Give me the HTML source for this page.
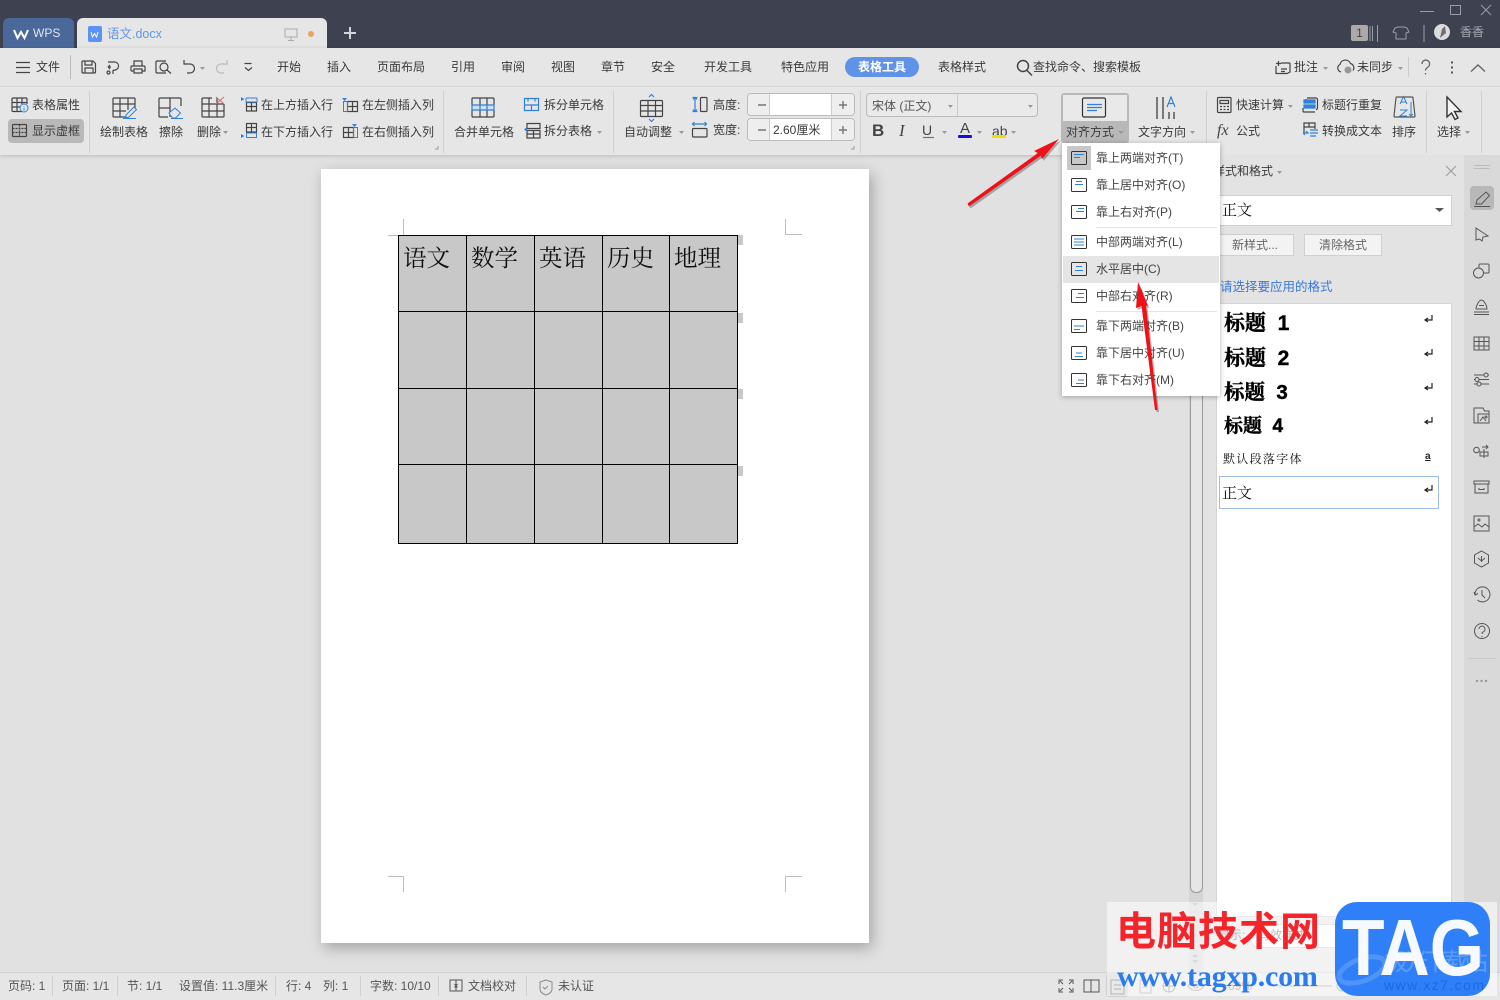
<!DOCTYPE html>
<html lang="zh"><head><meta charset="utf-8"><title>语文.docx</title>
<style>
html,body{margin:0;padding:0;width:1500px;height:1000px;overflow:hidden;background:#e1e1e1}
body{position:relative;font:12px/16px "Liberation Sans","Noto Sans CJK SC",sans-serif;color:#3a3a3a}
.a{position:absolute}
.t{position:absolute;white-space:nowrap;line-height:16px}
svg{position:absolute;left:0;top:0;overflow:visible}
.i{fill:none;stroke:#444;stroke-width:1.2}
.b{fill:none;stroke:#2f80d8;stroke-width:1.2}
.c{fill:#999}
.s{position:absolute;width:1px;background:#d0d0d0}
.m{position:absolute;left:1096px;white-space:nowrap;line-height:16px;color:#444}
.h{position:absolute;left:1224px;font:bold 21px/26px "Liberation Sans","Noto Serif CJK SC",serif;color:#000;white-space:pre;-webkit-text-stroke:.4px #000}
.tb{position:absolute;top:243px;font:23.500px/26px 'Noto Serif CJK SC',serif;color:#111;white-space:nowrap}
</style></head><body>

<div class="a" style="left:0;top:0;width:1500px;height:48px;background:#3e4250"></div>
<div class="a" style="left:3px;top:18px;width:71px;height:30px;background:#4a6899;border-radius:6px 6px 0 0"></div>
<div class="a" style="left:77px;top:18px;width:250px;height:30px;background:#e6e6e6;border-radius:6px 6px 0 0"></div>
<span class="t" style="left:33px;top:25px;color:#dfe5ee">WPS</span>
<span class="t" style="left:107px;top:26px;color:#5f95ee;font-size:12.5px">语文.docx</span>
<span class="t" style="left:1460px;top:24px;color:#a8abb2">香香</span>
<div class="a" style="left:1351px;top:25px;width:17px;height:16px;background:#aaa;border-radius:2px;color:#5c3d20;text-align:center;line-height:16px">1</div>

<div class="a" style="left:0;top:48px;width:1500px;height:107px;background:#e6e6e6;box-shadow:0 1px 4px rgba(0,0,0,.18)"></div>
<div class="a" style="left:0;top:86px;width:1500px;height:1px;background:#d6d6d6"></div>
<div class="a" style="left:70px;top:55px;width:1px;height:24px;background:#bbb"></div>
<div class="a" style="left:1408px;top:57px;width:1px;height:20px;background:#ccc"></div>

<span class="t" style="left:36px;top:59px">文件</span>
<span class="t" style="left:277px;top:59px">开始</span>
<span class="t" style="left:327px;top:59px">插入</span>
<span class="t" style="left:377px;top:59px">页面布局</span>
<span class="t" style="left:451px;top:59px">引用</span>
<span class="t" style="left:501px;top:59px">审阅</span>
<span class="t" style="left:551px;top:59px">视图</span>
<span class="t" style="left:601px;top:59px">章节</span>
<span class="t" style="left:651px;top:59px">安全</span>
<span class="t" style="left:704px;top:59px">开发工具</span>
<span class="t" style="left:781px;top:59px">特色应用</span>
<div class="a" style="left:845px;top:57px;width:74px;height:20px;background:#6093e8;border-radius:10px"></div>
<span class="t" style="left:858px;top:59px;color:#fff;font-weight:bold">表格工具</span>
<span class="t" style="left:938px;top:59px">表格样式</span>
<span class="t" style="left:1033px;top:59px">查找命令、搜索模板</span>
<span class="t" style="left:1294px;top:59px">批注</span>
<span class="t" style="left:1357px;top:59px">未同步</span>

<div class="s" style="left:89px;top:91px;height:62px"></div>
<div class="s" style="left:443px;top:91px;height:62px"></div>
<div class="s" style="left:613px;top:91px;height:62px"></div>
<div class="s" style="left:860px;top:91px;height:62px"></div>
<div class="s" style="left:1206px;top:91px;height:62px"></div>
<div class="s" style="left:1426px;top:91px;height:62px"></div>
<div class="s" style="left:1481px;top:91px;height:62px"></div>

<div class="a" style="left:8px;top:119px;width:76px;height:24px;background:#b9b9b9;border-radius:4px"></div>
<span class="t" style="left:32px;top:97px">表格属性</span>
<span class="t" style="left:32px;top:123px">显示虚框</span>
<span class="t" style="left:100px;top:124px">绘制表格</span>
<span class="t" style="left:159px;top:124px">擦除</span>
<span class="t" style="left:197px;top:124px">删除</span>
<span class="t" style="left:261px;top:97px">在上方插入行</span>
<span class="t" style="left:261px;top:124px">在下方插入行</span>
<span class="t" style="left:362px;top:97px">在左侧插入列</span>
<span class="t" style="left:362px;top:124px">在右侧插入列</span>
<span class="t" style="left:454px;top:124px">合并单元格</span>
<span class="t" style="left:544px;top:97px">拆分单元格</span>
<span class="t" style="left:544px;top:123px">拆分表格</span>
<span class="t" style="left:624px;top:124px">自动调整</span>
<span class="t" style="left:713px;top:97px">高度:</span>
<span class="t" style="left:713px;top:122px">宽度:</span>

<div class="a" style="left:747px;top:93px;width:106px;height:21px;background:#fff;border:1px solid #bbb;border-radius:4px"></div>
<div class="a" style="left:747px;top:118px;width:106px;height:21px;background:#fff;border:1px solid #bbb;border-radius:4px"></div>
<div class="a" style="left:748px;top:94px;width:21px;height:21px;background:#eee;border-right:1px solid #ccc;border-radius:4px 0 0 4px"></div>
<div class="a" style="left:748px;top:119px;width:21px;height:21px;background:#eee;border-right:1px solid #ccc;border-radius:4px 0 0 4px"></div>
<div class="a" style="left:831px;top:94px;width:22px;height:21px;background:#eee;border-left:1px solid #ccc;border-radius:0 4px 4px 0"></div>
<div class="a" style="left:831px;top:119px;width:22px;height:21px;background:#eee;border-left:1px solid #ccc;border-radius:0 4px 4px 0"></div>
<span class="t" style="left:773px;top:122px">2.60厘米</span>

<div class="a" style="left:866px;top:93px;width:170px;height:22px;background:#eaeaea;border:1px solid #bbb;border-radius:4px"></div>
<div class="a" style="left:957px;top:94px;width:1px;height:22px;background:#ccc"></div>
<span class="t" style="left:872px;top:98px;color:#555">宋体 (正文)</span>

<div class="a" style="left:1061px;top:93px;width:68px;height:50px;background:#b8b8b8;border-radius:3px"></div>
<div class="a" style="left:1063px;top:95px;width:64px;height:26px;background:#e9e9e9"></div>
<span class="t" style="left:1066px;top:124px">对齐方式</span>
<span class="t" style="left:1138px;top:124px">文字方向</span>
<span class="t" style="left:1236px;top:97px">快速计算</span>
<span class="t" style="left:1236px;top:123px">公式</span>
<span class="t" style="left:1217px;top:122px;font:italic 16px/18px 'Liberation Serif',serif;color:#444">fx</span>
<span class="t" style="left:1322px;top:97px">标题行重复</span>
<span class="t" style="left:1322px;top:123px">转换成文本</span>
<span class="t" style="left:1392px;top:124px">排序</span>
<span class="t" style="left:1437px;top:124px">选择</span>
<span class="t" style="left:872px;top:122px;font:bold 17px/18px 'Liberation Sans',sans-serif;color:#444">B</span>
<span class="t" style="left:899px;top:122px;font:italic 17px/18px 'Liberation Serif',serif;color:#444">I</span>
<span class="t" style="left:922px;top:121px;font:14px/18px 'Liberation Sans',sans-serif;color:#444">U</span>
<span class="t" style="left:960px;top:120px;font:15px/18px 'Liberation Sans',sans-serif;color:#444">A</span>
<span class="t" style="left:992px;top:122px;font:14px/18px 'Liberation Sans',sans-serif;color:#444">ab</span>

<!-- page -->
<div class="a" style="left:321px;top:169px;width:548px;height:774px;background:#fff;box-shadow:3px 5px 14px rgba(0,0,0,.28)"></div>
<svg width="1500" height="1000" viewBox="0 0 1500 1000">
<g fill="none" stroke="#bdbdbd" stroke-width="1">
<path d="M403.500 219V235.500H388M785.500 219V234.500H802M388 876.500H403.500V892M802 876.500H785.500V892"/>
</g>
<g fill="#c9c9c9"><rect x="738" y="235" width="5" height="10"/><rect x="738" y="313" width="5" height="10"/><rect x="738" y="389" width="5" height="10"/><rect x="738" y="466" width="5" height="10"/></g>
<rect x="398.500" y="235.500" width="339" height="308" fill="#c8c8c8" stroke="#000"/>
<path d="M466.500 235V544M534.500 235V544M602.500 235V544M669.500 235V544M398 311.500H738M398 388.500H738M398 464.500H738" stroke="#000" fill="none"/>
</svg>
<span class="tb" style="left:403px">语文</span>
<span class="tb" style="left:471px">数学</span>
<span class="tb" style="left:539px">英语</span>
<span class="tb" style="left:607px">历史</span>
<span class="tb" style="left:674px">地理</span>

<!-- right panel -->
<div class="a" style="left:1189px;top:155px;width:14px;height:817px;background:#d4d4d4"></div>
<div class="a" style="left:1190px;top:396px;width:11px;height:496px;background:#e6e6e6;border:1px solid #999;border-top:0;border-radius:0 0 6px 6px"></div>
<div class="a" style="left:1204px;top:155px;width:261px;height:817px;background:#e3e3e3"></div>
<div class="a" style="left:1464px;top:155px;width:36px;height:817px;background:#d9d9d9"></div>
<div class="a" style="left:1470px;top:186px;width:24px;height:24px;background:#b8b8b8;border-radius:4px"></div>
<span class="t" style="left:1213px;top:163px">样式和格式</span>
<div class="a" style="left:1216px;top:195px;width:234px;height:29px;background:#fff;border:1px solid #d0d0d0"></div>
<span class="t" style="left:1222px;top:201px;font:15px/18px 'Noto Serif CJK SC',serif;color:#111">正文</span>
<div class="a" style="left:1216px;top:234px;width:76px;height:20px;background:#f3f3f3;border:1px solid #cfcfcf"></div>
<div class="a" style="left:1304px;top:234px;width:76px;height:20px;background:#f3f3f3;border:1px solid #cfcfcf"></div>
<span class="t" style="left:1232px;top:237px;color:#666">新样式...</span>
<span class="t" style="left:1319px;top:237px;color:#666">清除格式</span>
<span class="t" style="left:1220px;top:279px;color:#3b78d8;font-size:12.500px">请选择要应用的格式</span>
<div class="a" style="left:1216px;top:303px;width:234px;height:612px;background:#fff;border:1px solid #d4d4d4"></div>
<span class="h" style="top:311px">标题  1</span>
<span class="h" style="top:346px">标题  2</span>
<span class="h" style="top:380px;font-size:20.500px">标题  3</span>
<span class="h" style="top:414px;font-size:19px">标题  4</span>
<span class="t" style="left:1223px;top:451px;font:12px/16px 'Noto Serif CJK SC',serif;letter-spacing:1.300px;color:#111">默认段落字体</span>
<div class="a" style="left:1219px;top:476px;width:218px;height:31px;border:1px solid #9dbde6"></div>
<span class="t" style="left:1222px;top:484px;font:15px/18px 'Noto Serif CJK SC',serif;color:#111">正文</span>
<span class="t" style="left:1425px;top:450px;font:bold 10px/14px 'Liberation Sans',sans-serif;color:#222;text-decoration:underline">a</span>
<span class="t" style="left:1218px;top:927px;color:#666">显示:</span>
<div class="a" style="left:1250px;top:924px;width:200px;height:22px;background:#fff;border:1px solid #ccc;border-radius:10px"></div>
<span class="t" style="left:1258px;top:927px;color:#666">有效样式</span>

<!-- status bar -->
<div class="a" style="left:0;top:972px;width:1500px;height:28px;background:#e6e6e6;border-top:1px solid #d0d0d0;box-sizing:border-box"></div>
<span class="t" style="left:8px;top:978px;color:#555">页码: 1</span>
<span class="t" style="left:62px;top:978px;color:#555">页面: 1/1</span>
<span class="t" style="left:127px;top:978px;color:#555">节: 1/1</span>
<span class="t" style="left:179px;top:978px;color:#555">设置值: 11.3厘米</span>
<span class="t" style="left:286px;top:978px;color:#555">行: 4</span>
<span class="t" style="left:323px;top:978px;color:#555">列: 1</span>
<span class="t" style="left:370px;top:978px;color:#555">字数: 10/10</span>
<span class="t" style="left:468px;top:978px;color:#555">文档校对</span>
<span class="t" style="left:558px;top:978px;color:#555">未认证</span>
<div class="s" style="left:52px;top:976px;height:20px"></div>
<div class="s" style="left:117px;top:976px;height:20px"></div>
<div class="s" style="left:275px;top:976px;height:20px"></div>
<div class="s" style="left:360px;top:976px;height:20px"></div>
<div class="s" style="left:438px;top:976px;height:20px"></div>
<div class="s" style="left:526px;top:976px;height:20px"></div>
<div class="a" style="left:1106px;top:973px;width:22px;height:24px;background:#cfcfcf;border-radius:3px"></div>

<!-- icons -->
<svg width="1500" height="1000" viewBox="0 0 1500 1000">
<path d="M14 30l3.500 8 3.500-6 3.500 6 3.500-8" fill="none" stroke="#fff" stroke-width="2"/>
<rect x="88" y="26" width="14" height="16" rx="2" fill="#5b93f5"/><path d="M91 32l1.500 5 2-3.500 2 3.500 1.500-5" fill="none" stroke="#fff"/>
<path d="M285 29h12v8h-12zM291 37v3M288 40.500h6" fill="none" stroke="#aaa"/>
<circle cx="311" cy="34" r="3" fill="#e8a55c"/>
<path d="M344 33h12M350 27v12" stroke="#d4d6dc" stroke-width="2"/>
<g fill="none" stroke="#9a9da6"><path d="M1420 11.500h14" /><rect x="1450.500" y="5.500" width="10" height="9"/><path d="M1481 5l10 10M1491 5l-10 10"/><path d="M1370 26v15M1372.500 26v15M1377.500 25v17M1424 25v17"/><path d="M1395 28l3-1h6l3 1 2 4-3 1v6h-10v-6l-3-1z"/></g>
<circle cx="1442" cy="32" r="8" fill="#d8dde0"/><path d="M1440 38l2-9 3-3 1 7z" fill="#7a6a6a"/>

<g class="i">
<path d="M16 62.500h14M16 67.500h14M16 72.500h14"/>
<path d="M83 61h10l2.500 2.500V72a1 1 0 0 1-1 1H83a1 1 0 0 1-1-1V62a1 1 0 0 1 1-1zM85 61v4h7v-4M85 73v-5h8v5"/>
<path d="M108 62h6a4 4 0 0 1 1 8l-2 .5V74M108 67h3M108 67l2-2M108 67l2 2"/><circle cx="108.500" cy="72.500" r="1.500"/>
<path d="M134 66v-5h8v5M131 71v-4a1 1 0 0 1 1-1h12a1 1 0 0 1 1 1v4h-3M134 71h-3M134 69h8v4h-8z"/>
<path d="M166 61h-9a1 1 0 0 0-1 1v10a1 1 0 0 0 1 1h9"/><circle cx="164" cy="67" r="4"/><path d="M167 70l4 3.500"/>
<path d="M184 64h6a4.500 4.500 0 0 1 0 9h-3M184 60v4h4"/>
<path d="M227 64h-6a4.500 4.500 0 0 0 0 9h3M227 60v4h-4" stroke="#bbb"/>
<path d="M244.500 63.500h7M245 67.500l3.500 3 3.500-3"/>
<circle cx="1023" cy="66" r="5.500" stroke-width="1.500"/><path d="M1027 70.500l5 5" stroke-width="1.500"/>
<path d="M1281 63h8a1 1 0 0 1 1 1v8l-3 1.500h-11V66M1278.500 61v5M1276 63.500h5M1281 69h6M1281 71.500h4"/>
<path d="M1341 72a4 4 0 0 1-1-7.500 5.500 5.500 0 0 1 10.500-1 4.500 4.500 0 0 1 2.500 7"/>
<path d="M1422 64a3.800 3.800 0 1 1 6 3c-1.500 1-2.500 2-2.500 3.500M1425.500 73v1.500" stroke-width="1.300" stroke="#666"/>
<path d="M1471 71.500l7-6.500 7 6.500" stroke-width="1.400" stroke="#666"/>
</g>
<circle cx="1348" cy="70" r="3.500" fill="#999"/>
<path d="M1452 61.500v2M1452 66.500v2M1452 71.500v2" stroke="#555" stroke-width="2"/>

<!-- ribbon dark strokes -->
<g class="i">
<path d="M22 111.500H13a1 1 0 0 1-1-1V99a1 1 0 0 1 1-1h13a1 1 0 0 1 1 1v5M12 102.500h15M12 107h9M17 98v13M22 98v6"/>
<rect x="12.500" y="124.500" width="14" height="12" rx="1"/><path d="M12.500 128.500h14M12.500 132.500h14M19.500 124.500v12" stroke-dasharray="2 1"/>
<path d="M126 117h-12a1 1 0 0 1-1-1V99a1 1 0 0 1 1-1h20a1 1 0 0 1 1 1v9M113 104h22M113 111h13M120 98v19M128 98v12"/>
<path d="M168 117h-8a1 1 0 0 1-1-1V99a1 1 0 0 1 1-1h20a1 1 0 0 1 1 1v7M170 98v19M159 108h11"/>
<path d="M212 98h-9a1 1 0 0 0-1 1v17a1 1 0 0 0 1 1h20a1 1 0 0 0 1-1v-12M202 104h22M202 111h22M209 98v19M217 98v19"/>
<path d="M246.500 102.500h10v8.500h-10zM246.500 106.500h10M251.500 102.500V111"/>
<path d="M246.500 123.500h10v8.500h-10zM246.500 127.500h10M251.500 123.500V132"/>
<path d="M347.500 101.500h10v10h-10zM352.500 101.500v10M347.500 106.500h10"/>
<path d="M343.500 127.500h10v10h-10zM348.500 127.500v10M343.500 132.500h10"/>
<path d="M472 105v-6a1 1 0 0 1 1-1h20a1 1 0 0 1 1 1v6M472 110v6a1 1 0 0 0 1 1h20a1 1 0 0 0 1-1v-6M480 98v7M487 98v7M480 110v7M487 110v7"/>
<path d="M527 123.500h13v5h-13zM527 130.500h13v7.500h-13zM527 134h13M533.500 130.500V138"/>
<rect x="640.500" y="100.500" width="22" height="16" rx="1"/><path d="M640.500 105.500h22M640.500 111h22M648 100.500v16M655.500 100.500v16"/>
<rect x="700.500" y="97.500" width="6.500" height="14" rx="1"/><rect x="692.500" y="128.500" width="14.500" height="8.500" rx="1"/>
<rect x="1217.500" y="97.500" width="13.500" height="15" rx="1"/><path d="M1220 100.500h8.500v3h-8.500zM1220 106.500h2M1223.500 106.500h2M1227 106.500h2M1220 109.500h2M1223.500 109.500h2M1227 109.500h2"/>
<path d="M1084 98h20a1.500 1.500 0 0 1 1.500 1.500v16a1.500 1.500 0 0 1-1.500 1.500h-20a1.500 1.500 0 0 1-1.500-1.500v-16A1.500 1.500 0 0 1 1084 98z" stroke="#333"/>
<path d="M1157 97v22M1163 97v22M1169 112v7M1174 112v7" stroke="#333"/>
<path d="M1307 98h9a1.500 1.500 0 0 1 1.500 1.500V108a1.500 1.500 0 0 1-1.500 1.500M1306 100v-1M1303 108v3a1 1 0 0 0 1 1h11"/>
<path d="M1304 131v-8h11v6M1304 127h11M1309 123v4M1304 131v3"/>
<path d="M1397 97h15a1 1 0 0 1 1 1l2 18a1 1 0 0 1-1 1h-19a1 1 0 0 1-1-1l2-18a1 1 0 0 1 1-1z" stroke="#555"/>
<path d="M1447 97v20l4.500-4 3.500 6.500 3-1.500-3.500-6.500h6.500z" stroke="#333" stroke-width="1.400" fill="#f4f4f4"/>
</g>
<g class="b">
<path d="M1087 104.500h15M1087 107.500h15M1087 110.500h10"/>
<path d="M472 105h22v5h-22zM480 105v5M487 105v5" fill="#cfe0f5"/>
<path d="M524.500 98.500h14v12h-14zM524.500 105h14M531.500 105v5.500M528 98.500v3M535 98.500v3"/>
<path d="M649 97l2.500-2.500L654 97M649 119l2.500 2.500 2.500-2.500"/>
<path d="M695 97.500v14M693 99.500l2-2 2 2M693 109.500l2 2 2-2M692.500 97.500h5M692.500 111.500h5"/>
<path d="M692.500 124h14M694.500 122l-2 2 2 2M704.500 122l2 2-2 2"/>
<path d="M1167 107l4-10 4 10M1168.500 103.500h5"/>
<path d="M1400 104l3.500-7.500 3.500 7.500M1401 102h5M1400 110h7l-7 6h7M1411 102v14M1409 114l2 2 2-2" stroke-width="1"/>
<path d="M1303 133h5l-2-2M1303 133l2 2M1310 133h8M1310 130h8M1310 136h6"/>
<path d="M1304 100h11v3h-11zM1304 105h11v3h-11z" fill="#2f80d8"/>
</g>
<g fill="#2f80d8">
<path d="M241 97l3.500 2-3.500 2zM241 134l3.500 2-3.500 2zM527 127l-3 2.500 3 2.500zM342 98h5l-2.500 3zM352 124h5l-2.500 3z"/>
<rect x="246" y="98" width="11" height="4" rx=".5" fill="none" stroke="#2f80d8"/>
<rect x="246.500" y="133" width="10" height="4.500" fill="none" stroke="#2f80d8"/>
<rect x="343.500" y="101.500" width="4" height="10" fill="none" stroke="#2f80d8"/>
<rect x="353.500" y="127.500" width="4" height="10" fill="none" stroke="#2f80d8"/>
</g>
<path d="M123 118.500h13M126 115l8-8 2.500 2.500-8 8h-2.500z" fill="#e6e6e6" stroke="#2f80d8"/>
<path d="M171 118.500h12M169 113l6-5 5.500 5-5 5h-3z" fill="#e6e6e6" stroke="#2f80d8"/>
<path d="M216 97l8 7M224 97l-8 7" stroke="#d96a6a" fill="none"/>
<circle cx="24" cy="108" r="4" fill="#e6e6e6" stroke="#2f80d8"/><path d="M24 106v.8M24 108v2.500" stroke="#2f80d8"/>
<path d="M923 137.500h11" stroke="#2f80d8" stroke-width="1.200"/>
<rect x="958" y="135" width="14" height="3" rx="1" fill="#1010e0"/>
<rect x="992" y="135" width="14" height="3" rx="1" fill="#eee000"/>
<g class="c">
<path d="M223 131h5l-2.500 3zM679 131h5l-2.500 3zM597 131h5l-2.500 3zM942 131h5l-2.500 3zM977 131h5l-2.500 3zM1011 131h5l-2.500 3zM1118 131h6l-3 3zM1190 131h5l-2.500 3zM1288 105h5l-2.500 3zM1465 131h5l-2.500 3zM948 105h5l-2.500 3zM1028 105h5l-2.500 3zM200 67h5l-2.500 3zM1323 67h5l-2.500 3zM1398 67h5l-2.500 3zM1277 171h5l-2.500 3z"/>
</g>
<path d="M758 105h8M839 105h8M843 101v8M758 130h8M839 130h8M843 126v8" stroke="#777" stroke-width="1.400"/>
<path d="M438 146v3h-3M854 146v3h-3" fill="none" stroke="#999"/>

<!-- panel -->
<path d="M1446 166l10 10M1456 166l-10 10" stroke="#999"/>
<path d="M1435 208h9l-4.500 4z" fill="#555"/>
<g fill="none" stroke="#222" stroke-width="1.200"><path d="M1432 315v5h-7M1428 318l-3 2 3 2M1432 349v5h-7M1428 352l-3 2 3 2M1432 383v5h-7M1428 386l-3 2 3 2M1432 417v5h-7M1428 420l-3 2 3 2M1432 485v5h-7M1428 488l-3 2 3 2"/></g>
<path d="M1192 903h6l-3 3zM1192 955h6l-3 3zM1192 960h6l-3 3z" fill="#aaa"/>

<!-- sidebar -->
<g fill="none" stroke="#555" stroke-width="1">
<path d="M1474 165.500h16M1474 168.500h16" stroke="#bbb"/>
<path d="M1474 206.500h16M1476 204l1-4 9-8 3.500 3.500-8 8.500z"/>
<path d="M1476 228l12 8-5 1 -1 4-2.500-2-3.500 1z"/>
<circle cx="1478.500" cy="273" r="5"/><path d="M1479 268v-3a1 1 0 0 1 1-1h8a1 1 0 0 1 1 1v7a1 1 0 0 1-1 1h-4"/>
<path d="M1474 312h15M1474 314.500h15M1476 309c0-3 3-9 5.500-9s5.500 6 5.500 9zM1479 305.500h5"/>
<path d="M1474 337h15v13h-15zM1474 341.500h15M1474 346h15M1479 337v13M1484 337v13"/>
<path d="M1474 375h10M1488 375h1M1474 379.500h1M1479 379.500h10M1474 384h3M1481 384h8"/><circle cx="1486" cy="375" r="2"/><circle cx="1477" cy="379.500" r="2"/><circle cx="1479" cy="384" r="2"/>
<path d="M1474 423v-15h9l1.500 3H1489v12zM1478 423v-9h11M1480 421l3-4 3 4"/><circle cx="1486" cy="417" r="1"/>
<path d="M1482 447h6M1486 445l2 2-2 2M1484 449v9M1480 452h8v4h-8z"/><circle cx="1476.500" cy="450" r="2.800"/>
<path d="M1474 481h15v3h-15zM1475 484v9h13v-9M1479 488v1.500h5V488"/>
<path d="M1474 516h15v15h-15zM1474 527l4-3 4 3 3-3 4 3"/><circle cx="1479" cy="520" r="1"/>
<path d="M1481.500 551l7 4v8l-7 4-7-4v-8zM1481.500 556v6M1478 558l3.500 3 3.500-3"/>
<path d="M1475 595a7.500 7.500 0 1 1 2.500 5M1474 592l1 3 3-1.500M1482 590v5l3 3"/>
<circle cx="1482" cy="631" r="7.500"/><path d="M1479 629a3 3 0 1 1 4 3c-1 .5-1 1-1 2M1482 636v1"/>
<path d="M1468 658.500h28" stroke="#c8c8c8"/>
</g>
<g fill="#999"><circle cx="1477" cy="681" r="1.200"/><circle cx="1481.500" cy="681" r="1.200"/><circle cx="1486" cy="681" r="1.200"/></g>

<!-- status icons -->
<g fill="none" stroke="#555">
<path d="M450 980h12v11h-12zM456 980v11M454.500 984l3 3.500M457.500 984l-3 3.500"/>
<path d="M546 980l-6 2v7c0 3 3 5 6 6 3-1 6-3 6-6v-7zM543 987l2 2 3-3" stroke="#888"/>
<path d="M1059 984v-4h4M1073 984v-4h-4M1059 988v4h4M1073 988v4h-4M1060 981l3 3M1072 981l-3 3M1060 991l3-3M1072 991l-3-3"/>
<path d="M1084 980h7v12h-7zM1091 980h8v12h-8z"/>
<path d="M1111 980h13v14h-13zM1114 985h7M1114 989h7"/>
<path d="M1140 980h11v13h-11zM1143 984h5M1143 987h5" stroke="#999"/>
<circle cx="1169" cy="986" r="6" stroke="#888"/><path d="M1163 986h12M1169 980v12" stroke="#888"/>
<path d="M1188 986c4-6 12-6 16 0-4 6-12 6-16 0z" stroke="#888"/><circle cx="1196" cy="986" r="2" stroke="#888"/>
<path d="M1276 986h6M1290 986h42" stroke="#999"/><circle cx="1342" cy="986" r="5" stroke="#888"/>
</g>
</svg>
<span class="t" style="left:1228px;top:978px;color:#777">69%</span>

<!-- dropdown -->
<div class="a" style="left:1062px;top:143px;width:158px;height:253px;background:#fff;box-shadow:0 1px 5px rgba(0,0,0,.3)"></div>
<div class="a" style="left:1067px;top:146px;width:24px;height:24px;background:#c8c8c8"></div>
<div class="a" style="left:1063px;top:256px;width:156px;height:27px;background:#e5e5e5"></div>
<div class="a" style="left:1096px;top:227px;width:121px;height:1px;background:#e4e4e4"></div>
<div class="a" style="left:1096px;top:311px;width:121px;height:1px;background:#e4e4e4"></div>
<span class="m" style="top:150px">靠上两端对齐(T)</span>
<span class="m" style="top:177px">靠上居中对齐(O)</span>
<span class="m" style="top:204px">靠上右对齐(P)</span>
<span class="m" style="top:234px">中部两端对齐(L)</span>
<span class="m" style="top:261px">水平居中(C)</span>
<span class="m" style="top:288px">中部右对齐(R)</span>
<span class="m" style="top:318px">靠下两端对齐(B)</span>
<span class="m" style="top:345px">靠下居中对齐(U)</span>
<span class="m" style="top:372px">靠下右对齐(M)</span>
<svg width="1500" height="1000" viewBox="0 0 1500 1000">
<g fill="none" stroke="#333"><rect x="1071.500" y="151.500" width="15" height="13" rx="1"/><rect x="1071.500" y="178.500" width="15" height="13" rx="1"/><rect x="1071.500" y="205.500" width="15" height="13" rx="1"/><rect x="1071.500" y="235.500" width="15" height="13" rx="1"/><rect x="1071.500" y="262.500" width="15" height="13" rx="1"/><rect x="1071.500" y="289.500" width="15" height="13" rx="1"/><rect x="1071.500" y="319.500" width="15" height="13" rx="1"/><rect x="1071.500" y="346.500" width="15" height="13" rx="1"/><rect x="1071.500" y="373.500" width="15" height="13" rx="1"/></g>
<g fill="none" stroke="#2f80d8">
<path d="M1074 154.500h10M1074 157.500h6M1076 181.500h6M1075 184.500h8M1078 208.500h6M1076 211.500h8"/>
<path d="M1074 239h10M1074 242h10M1074 245h10M1076 266.500h6M1075 270.500h8M1078 293.500h6M1076 297.500h8"/>
<path d="M1074 326h10M1074 329.500h6M1076 353h6M1075 356.500h8M1078 380h6M1076 383.500h8"/>
</g>
<!-- red arrows -->
<g fill="#000" opacity=".28" transform="translate(1.500 2)">
<path d="M967.500 203.500L1038 153L1034 151L1059 139L1042 159L1041 155.500L969 206.500z"/>
<path d="M1138 282L1148 306L1146 305.500L1157.500 410L1155 410L1141.500 306L1136 308z"/>
</g>
<path d="M967.500 203.500L1038 153L1034 151L1059 139L1042 159L1041 155.500L969 206.500z" fill="#f01018"/>
<path d="M1138 282L1148 306L1146 305.500L1157.500 410L1155 410L1141.500 306L1136 308z" fill="#f01018"/>
</svg>

<!-- watermark -->
<div class="a" style="left:1107px;top:902px;width:390px;height:94px;background:rgba(255,255,255,.55)"></div>
<span class="t" style="left:1116px;top:906px;font:bold 40px/44px 'Noto Sans CJK SC',sans-serif;color:#f5232a;letter-spacing:1px">电脑技术网</span>
<span class="t" style="left:1117px;top:960px;font:bold 30px/34px 'Liberation Serif',serif;color:#2b7cf0;letter-spacing:-.2px">www.tagxp.com</span>
<div class="a" style="left:1335px;top:902px;width:155px;height:94px;background:#2f80f8;border-radius:22px"></div>
<svg width="1500" height="1000" viewBox="0 0 1500 1000">
<ellipse cx="1362" cy="970" rx="24" ry="11" fill="none" stroke="#fff" stroke-width="5" opacity=".16" transform="rotate(-20 1362 970)"/>
<text x="1342" y="975" font-family="Liberation Sans" font-weight="bold" font-size="80" fill="#f6f9ff" textLength="142" lengthAdjust="spacingAndGlyphs">TAG</text>
<text x="1384" y="970" font-family="Noto Sans CJK SC" font-size="24" fill="#fff" opacity=".22" textLength="104">极光下载站</text>
<text x="1384" y="990" font-family="Liberation Sans" font-size="14" fill="#1260d8" opacity=".7" textLength="100">www.xz7.com</text>
</svg>
</body></html>
